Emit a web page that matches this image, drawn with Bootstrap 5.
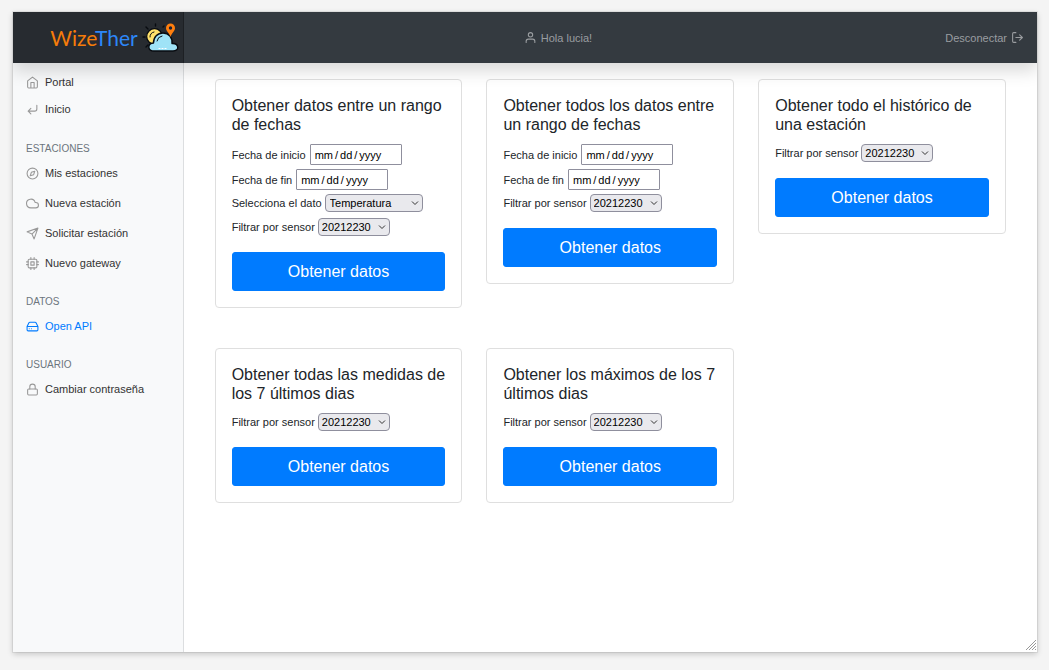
<!DOCTYPE html>
<html lang="en-US">
<head>
<meta charset="utf-8">
<meta name="viewport" content="width=device-width, initial-scale=1">
<title>WizeTher - Open API</title>
<link rel="stylesheet" href="https://cdn.jsdelivr.net/npm/bootstrap@5.3.0/dist/css/bootstrap.min.css">
<style>
  body { background: #f4f4f4; padding: 12px 12px 18px 13px; font-family: "Liberation Sans", Arial, sans-serif; font-size: 11px; line-height: 16px; color: #212529; }
  .app-window { min-height: calc(100vh - 30px); background: #fff; box-shadow: 0 0 0 1px rgba(0,0,0,.06), 0 2px 6px rgba(0,0,0,.2); }
  .app-clip { overflow: hidden; }
  .top-bar { background: #343a40; min-height: 51px; box-shadow: 0 8px 16px rgba(0,0,0,.15); z-index: 2; }
  .top-bar a, .top-bar .hello { color: #9a9da0; }
  .brand-box { background: rgba(0,0,0,.25); box-shadow: inset -1px 0 0 rgba(0,0,0,.25); padding-right: 4px; }
  .brand-text { font-family: Lato, sans-serif; font-weight: 400; font-size: 21px; line-height: 28px; color: #f57c0a; }
  .brand-text span { color: #2d87f8; }
  .logout { padding: 0 13px; }
  .feather { width: 13px; height: 13px; fill: none; stroke: currentColor; stroke-width: 2; stroke-linecap: round; stroke-linejoin: round; flex: none; }
  .side { background: #f8f9fa; border-right: 1px solid #dcdee0; padding: 5px 0; }
  .side .nav-link { display: flex; align-items: center; gap: 6px; padding: 7px 13px; font-size: 11px; line-height: 16px; color: #333; }
  .side .tight { margin-bottom: 21px; }
  .side .tight .nav-link { padding: 6px 13px 5px; }
  .side .nav-link .feather { color: #999; }
  .side .nav-link.active, .side .nav-link.active .feather { color: #007bff; }
  .side-title { font-size: 10px; line-height: 12px; color: #6c757d; font-weight: 400; margin: 18px 13px 3px; text-transform: uppercase; }
  .main-area { padding: 16px 31px; }
  .cards { row-gap: 40px; }
  .api-card { border-color: #dfdfdf; border-radius: 4px; }
  .api-card h2 { font-size: 16px; line-height: 19px; font-weight: 400; margin-bottom: 8px; }
  .field { display: flex; align-items: center; gap: 3px; padding: 2px 0 4px; }
  .field.date { gap: 4px; padding-bottom: 2px; }
  .field input { width: 92px; height: 21px; border: 1px solid #8f8f9d; border-radius: 1px; padding: 0 0 0 4px; background: #fff; color: #000; font-size: 11px; }
  .field input::-webkit-calendar-picker-indicator { display: none; }
  .field input::-webkit-datetime-edit-text { padding: 0 2px; }
  .field select { appearance: none; width: 72px; height: 18px; border: 1px solid #8f8f9d; border-radius: 4px; padding: 0 0 0 3px; color: #000; font-size: 11px; line-height: 16px;
    background: #e9e9ed url("data:image/svg+xml,%3Csvg xmlns='http://www.w3.org/2000/svg' viewBox='0 0 8 8'%3E%3Cpath d='M1 2.5l3 3 3-3' fill='none' stroke='%23333'/%3E%3C/svg%3E") no-repeat right 3px center / 8px 8px; }
  .field select.wide { width: 98px; padding-left: 4px; }
  .btn-get { --bs-btn-bg: #007bff; --bs-btn-border-color: #007bff; --bs-btn-font-size: 16px; --bs-btn-border-radius: 3px; line-height: 24px; padding: 7px 8px 6px; margin-top: 12px; }
  .grip { right: 0; bottom: 1px; width: 12px; height: 12px; }
</style>
</head>
<body>
<div class="app-window position-relative d-flex flex-column">
  <div class="app-clip d-flex flex-column flex-grow-1">
    <header class="top-bar position-relative d-flex">
      <a href="#" class="brand-box col-2 d-flex align-items-center justify-content-end text-decoration-none" aria-label="WizeTher">
        <span class="brand-text">Wize<span>Ther</span></span>
        <svg class="ms-1" width="38" height="30" viewBox="0 0 38 30" fill="none" stroke-linecap="round" stroke-linejoin="round">
          <path d="M13.500 1v2M4 4l2 2M1 14h2M4 24l2-2M21 4l1-1" stroke="#080b10" stroke-width="1.400"/>
          <circle cx="12.500" cy="13.500" r="7.800" fill="#ffe16b" stroke="#080b10" stroke-width="1.200"/>
          <path d="M8 14a5 5 0 0 1 4-5" stroke="#080b10"/>
          <path d="M12 28c-6.500 0-7-7.500-.5-8 0-6 4-10 9.500-10 6 0 9.500 4.500 9 10.500 7-.5 8 7.500 1 7.500z" fill="#9fe3f7" stroke="#080b10" stroke-width="1.400"/>
          <path d="M15 18a6 6 0 0 1 5-5" stroke="#080b10"/>
          <path d="M17 25.500h1M20 25.500h1M23 25.500h1" stroke="#fff" stroke-width="1.200"/>
          <path d="M28.500 14c-1-4-4.500-5.500-4.500-9a4.500 4.500 0 0 1 9 0c0 3.500-3.500 5-4.500 9z" fill="#ff7f0e"/>
          <circle cx="28.500" cy="5" r="1.700" fill="#1a2238"/>
        </svg>
      </a>
      <div class="flex-grow-1 d-flex align-items-center">
        <div class="hello flex-grow-1 d-flex justify-content-center align-items-center gap-1">
          <svg class="feather" viewBox="0 0 24 24"><path d="M20 21v-2a4 4 0 0 0-4-4H8a4 4 0 0 0-4 4v2"/><circle cx="12" cy="7" r="4"/></svg>
          <span>Hola lucia!</span>
        </div>
        <a href="#" class="logout d-flex align-items-center gap-1 text-decoration-none">Desconectar
          <svg class="feather" viewBox="0 0 24 24"><path d="M9 21H5a2 2 0 0 1-2-2V5a2 2 0 0 1 2-2h4M16 17l5-5-5-5M21 12H9"/></svg>
        </a>
      </div>
    </header>
    <div class="d-flex flex-grow-1">
      <nav class="side col-2" aria-label="Menú">
        <ul class="nav flex-column tight">
          <li><a class="nav-link" href="#"><svg class="feather" viewBox="0 0 24 24"><path d="M3 9l9-7 9 7v11a2 2 0 0 1-2 2H5a2 2 0 0 1-2-2zM9 22V12h6v10"/></svg>Portal</a></li>
          <li><a class="nav-link" href="#"><svg class="feather" viewBox="0 0 24 24"><path d="M9 10l-5 5 5 5M20 4v7a4 4 0 0 1-4 4H4"/></svg>Inicio</a></li>
        </ul>
        <h6 class="side-title">Estaciones</h6>
        <ul class="nav flex-column">
          <li><a class="nav-link" href="#"><svg class="feather" viewBox="0 0 24 24"><circle cx="12" cy="12" r="10"/><path d="M16.240 7.760l-2.120 6.360-6.360 2.120 2.120-6.360z"/></svg>Mis estaciones</a></li>
          <li><a class="nav-link" href="#"><svg class="feather" viewBox="0 0 24 24"><path d="M18 10h-1.260A8 8 0 1 0 9 20h9a5 5 0 0 0 0-10z"/></svg>Nueva estación</a></li>
          <li><a class="nav-link" href="#"><svg class="feather" viewBox="0 0 24 24"><path d="M22 2L11 13M22 2l-7 20-4-9-9-4z"/></svg>Solicitar estación</a></li>
          <li><a class="nav-link" href="#"><svg class="feather" viewBox="0 0 24 24"><rect x="4" y="4" width="16" height="16" rx="2"/><rect x="9" y="9" width="6" height="6"/><path d="M9 1v3M15 1v3M9 20v3M15 20v3M20 9h3M20 14h3M1 9h3M1 14h3"/></svg>Nuevo gateway</a></li>
        </ul>
        <h6 class="side-title">Datos</h6>
        <ul class="nav flex-column">
          <li><a class="nav-link active" href="#" aria-current="page"><svg class="feather" viewBox="0 0 24 24"><path d="M22 12H2M5.450 5.110L2 12v6a2 2 0 0 0 2 2h16a2 2 0 0 0 2-2v-6l-3.450-6.890A2 2 0 0 0 16.760 4H7.240a2 2 0 0 0-1.790 1.110zM6 16h.01M10 16h.01"/></svg>Open API</a></li>
        </ul>
        <h6 class="side-title">Usuario</h6>
        <ul class="nav flex-column">
          <li><a class="nav-link" href="#"><svg class="feather" viewBox="0 0 24 24"><rect x="3" y="11" width="18" height="11" rx="2"/><path d="M7 11V7a5 5 0 0 1 10 0v4"/></svg>Cambiar contraseña</a></li>
        </ul>
      </nav>
      <main class="main-area flex-grow-1">
        <div class="row cards align-items-start">
          <div class="col-12 col-md-4">
            <form class="card api-card"><div class="card-body">
              <h2>Obtener datos entre un rango de fechas</h2>
              <div class="field date"><label for="a1">Fecha de inicio</label><input type="date" id="a1"></div>
              <div class="field date"><label for="a2">Fecha de fin</label><input type="date" id="a2"></div>
              <div class="field"><label for="a3">Selecciona el dato</label><select id="a3" class="wide"><option>Temperatura</option></select></div>
              <div class="field"><label for="a4">Filtrar por sensor</label><select id="a4"><option>20212230</option></select></div>
              <button type="button" class="btn btn-primary btn-get w-100">Obtener datos</button>
            </div></form>
          </div>
          <div class="col-12 col-md-4">
            <form class="card api-card"><div class="card-body">
              <h2>Obtener todos los datos entre un rango de fechas</h2>
              <div class="field date"><label for="b1">Fecha de inicio</label><input type="date" id="b1"></div>
              <div class="field date"><label for="b2">Fecha de fin</label><input type="date" id="b2"></div>
              <div class="field"><label for="b3">Filtrar por sensor</label><select id="b3"><option>20212230</option></select></div>
              <button type="button" class="btn btn-primary btn-get w-100">Obtener datos</button>
            </div></form>
          </div>
          <div class="col-12 col-md-4">
            <form class="card api-card"><div class="card-body">
              <h2>Obtener todo el histórico de una estación</h2>
              <div class="field"><label for="c1">Filtrar por sensor</label><select id="c1"><option>20212230</option></select></div>
              <button type="button" class="btn btn-primary btn-get w-100">Obtener datos</button>
            </div></form>
          </div>
          <div class="col-12 col-md-4">
            <form class="card api-card"><div class="card-body">
              <h2>Obtener todas las medidas de los 7 últimos dias</h2>
              <div class="field"><label for="d1">Filtrar por sensor</label><select id="d1"><option>20212230</option></select></div>
              <button type="button" class="btn btn-primary btn-get w-100">Obtener datos</button>
            </div></form>
          </div>
          <div class="col-12 col-md-4">
            <form class="card api-card"><div class="card-body">
              <h2>Obtener los máximos de los 7 últimos dias</h2>
              <div class="field"><label for="e1">Filtrar por sensor</label><select id="e1"><option>20212230</option></select></div>
              <button type="button" class="btn btn-primary btn-get w-100">Obtener datos</button>
            </div></form>
          </div>
        </div>
      </main>
    </div>
  </div>
  <svg class="grip position-absolute" viewBox="0 0 12 12" stroke="#999" fill="none" aria-hidden="true"><path d="M1 11L11 1M4 11l7-7M7 11l4-4M10 11l1-1"/></svg>
</div>
<script src="https://cdn.jsdelivr.net/npm/bootstrap@5.3.0/dist/js/bootstrap.bundle.min.js"></script>
</body>
</html>
